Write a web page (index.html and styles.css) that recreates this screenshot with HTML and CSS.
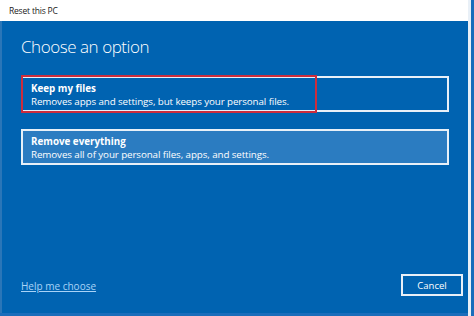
FILE: index.html
```html
<!DOCTYPE html>
<html lang="en">
<head>
<meta charset="utf-8">
<title>Reset this PC</title>
<link rel="stylesheet" href="styles.css">
</head>
<body>
<div class="screen">
  <div class="window">
    <div class="titlebar">Reset this PC</div>
    <div class="content">
      <h1 class="heading">Choose an option</h1>
      <div class="options">
        <div class="option option-keep">
          <div class="option-title">Keep my files</div>
          <div class="option-desc">Removes apps and settings, but keeps your personal files.</div>
          <div class="highlight"></div>
        </div>
        <div class="option option-selected">
          <div class="option-title">Remove everything</div>
          <div class="option-desc">Removes all of your personal files, apps, and settings.</div>
        </div>
      </div>
      <div class="footer">
        <a class="help" href="#">Help me choose</a>
        <button class="cancel" type="button">Cancel</button>
      </div>
    </div>
  </div>
  <div class="edge"></div>
</div>
</body>
</html>
```

FILE: styles.css
```css
html, body {
  margin: 0;
  padding: 0;
}
body {
  width: 474px;
  height: 316px;
  overflow: hidden;
  background: #1a6dbb;
  font-family: "Open Sans", "Noto Sans", sans-serif;
}
.screen {
  display: flex;
  height: 316px;
}
.window {
  width: 468px;
  height: 313px;
  display: flex;
  flex-direction: column;
  background: #0063b1;
  border-left: 2px solid #2a76b8;
  box-sizing: border-box;
}
.edge {
  width: 3px;
  height: 316px;
  background: #e9f0f7;
}
.titlebar {
  height: 21px;
  background: #ffffff;
  margin-left: -2px;
  padding-left: 9px;
  font-size: 8.5px;
  line-height: 21px;
  color: #1a1a1a;
  letter-spacing: -0.2px;
}
.content {
  flex: 1;
  display: flex;
  flex-direction: column;
  padding: 14px 0 0 19px;
}
.heading {
  margin: 0;
  font-weight: 300;
  font-size: 17px;
  line-height: 24px;
  color: #ffffff;
  letter-spacing: -0.45px;
}
.options {
  margin-top: 17px;
  display: flex;
  flex-direction: column;
  gap: 17px;
  width: 428px;
}
.option {
  position: relative;
  height: 36px;
  box-sizing: border-box;
  border: 2px solid #e8f0f8;
  padding: 5px 0 0 8px;
  color: #ffffff;
}
.option-selected {
  background: #2b7cc1;
}
.option-title {
  font-weight: 700;
  font-size: 9.8px;
  line-height: 12px;
}
.option-desc {
  font-size: 9.8px;
  line-height: 13px;
  letter-spacing: -0.1px;
}
.highlight {
  position: absolute;
  left: -2px;
  top: -3px;
  width: 296px;
  height: 38px;
  border: 2px solid #cc2d3c;
  box-sizing: border-box;
}
.footer {
  margin-top: auto;
  margin-bottom: 17px;
  display: flex;
  justify-content: space-between;
  align-items: center;
  padding-right: 5px;
}
.help {
  color: #a9d3f7;
  font-size: 10px;
  margin-top: 2px;
  text-decoration: underline;
  text-underline-offset: 1px;
}
.cancel {
  width: 62px;
  height: 22px;
  background: #0063b1;
  border: 2px solid #e8f0f8;
  color: #ffffff;
  font-family: "Open Sans", "Noto Sans", sans-serif;
  font-size: 9.5px;
  padding: 0;
}
```
